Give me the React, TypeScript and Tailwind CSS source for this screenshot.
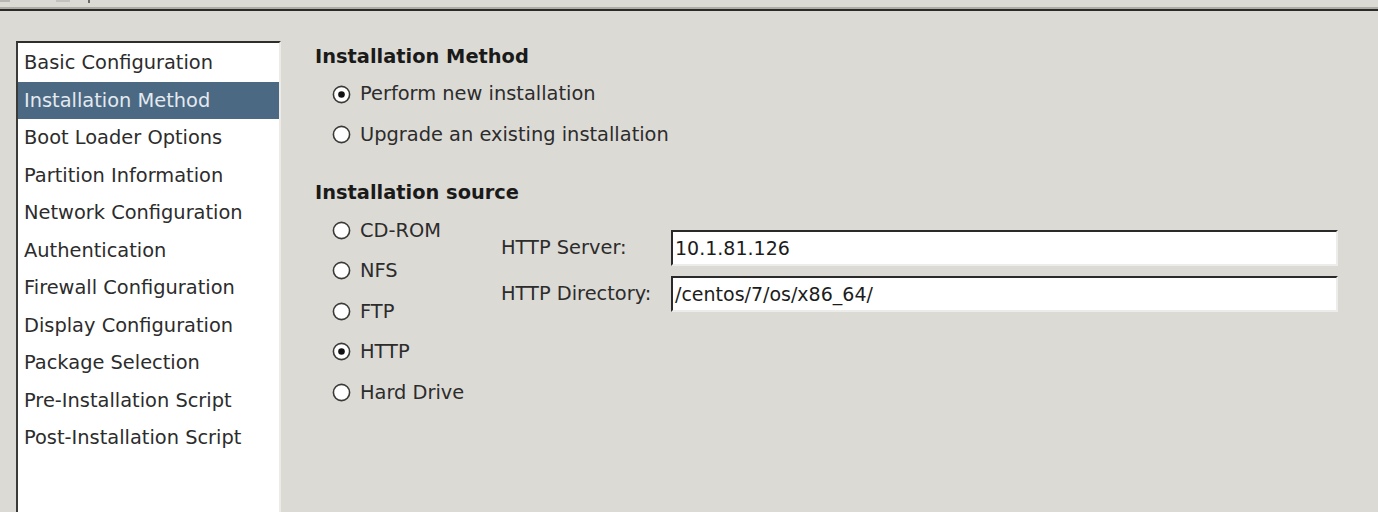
import React from "react";

const font = { fontFamily: '"DejaVu Sans", "Liberation Sans", sans-serif' };

const items = [
  "Basic Configuration",
  "Installation Method",
  "Boot Loader Options",
  "Partition Information",
  "Network Configuration",
  "Authentication",
  "Firewall Configuration",
  "Display Configuration",
  "Package Selection",
  "Pre-Installation Script",
  "Post-Installation Script",
];

function Radio({ checked }: { checked?: boolean }) {
  return (
    <svg width="19" height="19" viewBox="0 0 19 19" className="shrink-0">
      <circle cx="9.5" cy="9.5" r="8.1" fill="#ffffff" stroke="#3a3a38" strokeWidth="1.6" />
      {checked && <circle cx="9.5" cy="9.5" r="3.3" fill="#111111" />}
    </svg>
  );
}

function RadioRow({ label, checked, h }: { label: string; checked?: boolean; h: string }) {
  return (
    <div className={`flex items-center gap-[9px] ${h}`}>
      <Radio checked={checked} />
      <span className="text-[19.4px] leading-none text-[#2c2c2c]">{label}</span>
    </div>
  );
}

function Field({ value }: { value: string }) {
  return (
    <div className="h-[36px] flex items-center bg-white border-t-2 border-l-2 border-r-2 border-b-2 border-t-[#2a2a2a] border-l-[#2a2a2a] border-r-[#ececea] border-b-[#ececea] pl-[2px] text-[19px] text-[#1c1c1c]">
      {value}
    </div>
  );
}

export default function App() {
  return (
    <div className="w-[1378px] h-[512px] overflow-hidden bg-[#dcdad5]" style={font}>
      {/* top strip remnants */}
      <div className="relative h-[7px]">
        <div className="absolute left-0 top-0 w-[10px] h-[2px] bg-[#b8b6b0]" />
        <div className="absolute left-[56px] top-0 w-[14px] h-[2px] bg-[#c4c2bc]" />
        <div className="absolute left-[88px] top-0 w-[2px] h-[3px] bg-[#6a6a66]" />
      </div>
      <div className="h-[2px] bg-[#aeaca4]" />
      <div className="h-[2px] bg-[#2a2a28]" />

      <div className="flex pt-[30px]">
        {/* sidebar list */}
        <div className="ml-[16px] w-[265px] h-[500px] bg-white border-l-2 border-t-2 border-r-2 border-l-[#3a3a38] border-t-[#2e2e2c] border-r-[#ecebe8] pt-[1px]">
          {items.map((it, i) => (
            <div
              key={it}
              className={`h-[37.5px] flex items-center pl-[6px] text-[19.4px] leading-none ${
                i === 1 ? "bg-[#4b6983] text-[#e4eaf0]" : "text-[#2c2c2c]"
              }`}
            >
              {it}
            </div>
          ))}
        </div>

        {/* main panel */}
        <div className="ml-[34px] flex-1 mr-[40px] pt-[1px]">
          <div className="h-[30px] flex items-center font-bold text-[19.4px] leading-none text-[#1a1a1a]">
            Installation Method
          </div>
          <div className="pl-[17px] pt-[2px]">
            <RadioRow label="Perform new installation" checked h="h-[40px]" />
            <RadioRow label="Upgrade an existing installation" h="h-[41px]" />
          </div>
          <div className="mt-[23px] h-[30px] flex items-center font-bold text-[19.4px] leading-none text-[#1a1a1a]">
            Installation source
          </div>
          <div className="flex items-start pt-[2px]">
            <div className="pl-[17px] w-[186px]">
              <RadioRow label="CD-ROM" h="h-[40.5px]" />
              <RadioRow label="NFS" h="h-[40.5px]" />
              <RadioRow label="FTP" h="h-[40.5px]" />
              <RadioRow label="HTTP" checked h="h-[40.5px]" />
              <RadioRow label="Hard Drive" h="h-[40.5px]" />
            </div>
            <div className="flex-1 mt-[20px] grid grid-cols-[170px_1fr] content-start gap-y-[10px] items-center">
              <span className="text-[19.4px] leading-none text-[#2c2c2c]">HTTP Server:</span>
              <Field value="10.1.81.126" />
              <span className="text-[19.4px] leading-none text-[#2c2c2c]">HTTP Directory:</span>
              <Field value="/centos/7/os/x86_64/" />
            </div>
          </div>
        </div>
      </div>
    </div>
  );
}
